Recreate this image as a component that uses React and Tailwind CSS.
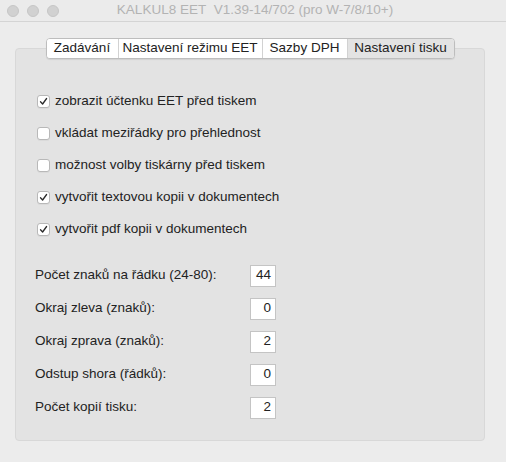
import React from 'react';

const tabs = [
  { label: 'Zadávání', w: 'w-[71px]' },
  { label: 'Nastavení režimu EET', w: 'w-[144px]' },
  { label: 'Sazby DPH', w: 'w-[85px]' },
  { label: 'Nastavení tisku', w: 'w-[107px]', active: true },
];

const checks = [
  { label: 'zobrazit účtenku EET před tiskem', checked: true },
  { label: 'vkládat meziřádky pro přehlednost', checked: false },
  { label: 'možnost volby tiskárny před tiskem', checked: false },
  { label: 'vytvořit textovou kopii v dokumentech', checked: true },
  { label: 'vytvořit pdf kopii v dokumentech', checked: true },
];

const fields = [
  { label: 'Počet znaků na řádku (24-80):', value: '44' },
  { label: 'Okraj zleva (znaků):', value: '0' },
  { label: 'Okraj zprava (znaků):', value: '2' },
  { label: 'Odstup shora (řádků):', value: '0' },
  { label: 'Počet kopií tisku:', value: '2' },
];

function Checkbox({ checked }) {
  return (
    <span className="w-[13px] h-[13px] rounded-[3px] border border-[#b8b8b8] bg-white flex items-center justify-center shadow-[0_1px_0_rgba(0,0,0,0.04)]">
      {checked && (
        <svg width="9" height="9" viewBox="0 0 9 9">
          <path d="M1.5 4.8 L3.6 7 L7.6 1.5" fill="none" stroke="#2b2b2b" strokeWidth="1.3" strokeLinecap="round" strokeLinejoin="round" />
        </svg>
      )}
    </span>
  );
}

export default function App() {
  return (
    <div className="w-[506px] h-[462px] bg-[#ececec] flex flex-col text-[13.5px] text-[#222]" style={{ fontFamily: '"Liberation Sans", Arial, sans-serif' }}>
      <div className="h-[22px] relative flex items-center justify-center bg-[#ebebeb] border-b border-[#d4d4d4]">
        <div className="absolute left-[7px] top-[5px] flex gap-[8px]">
          <span className="w-[12px] h-[12px] rounded-full bg-[#d1d1d1] border border-[#c6c6c6]" />
          <span className="w-[12px] h-[12px] rounded-full bg-[#d1d1d1] border border-[#c6c6c6]" />
          <span className="w-[12px] h-[12px] rounded-full bg-[#d1d1d1] border border-[#c6c6c6]" />
        </div>
        <span className="text-[#b3b3b3] text-[13.5px] ml-[4px]">KALKUL8 EET&nbsp; V1.39-14/702 (pro W-7/8/10+)</span>
      </div>

      <div className="w-[470px] ml-[15px] flex flex-col items-center pt-[16px]">
        <div className="relative z-10 flex h-[21px] mb-[-11px] rounded-[4px] border border-[#bdbdbd] bg-white overflow-hidden shadow-[0_1px_1px_rgba(0,0,0,0.08)]">
          {tabs.map((t, i) => (
            <div
              key={t.label}
              className={`${t.w} flex items-center justify-center ${i > 0 ? 'border-l border-[#d2d2d2]' : ''} ${t.active ? 'bg-[#e3e3e3]' : 'bg-white'}`}
            >
              {t.label}
            </div>
          ))}
        </div>

        <div className="w-[470px] h-[393px] bg-[#e3e3e3] border border-[#d8d8d8] rounded-[4px] pt-[36px] pl-[21px] pr-[20px] flex flex-col">
          {checks.map((c) => (
            <div key={c.label} className="h-[32px] flex items-center gap-[5px]">
              <Checkbox checked={c.checked} />
              <span>{c.label}</span>
            </div>
          ))}
          <div className="mt-[14px]">
            {fields.map((f) => (
              <div key={f.label} className="h-[33px] flex items-center ml-[-2px]">
                <span className="w-[215px]">{f.label}</span>
                <span className="w-[26px] h-[22px] bg-white border border-[#c4c4c4] flex items-center justify-end pr-[4px]">
                  {f.value}
                </span>
              </div>
            ))}
          </div>
        </div>
      </div>
    </div>
  );
}
